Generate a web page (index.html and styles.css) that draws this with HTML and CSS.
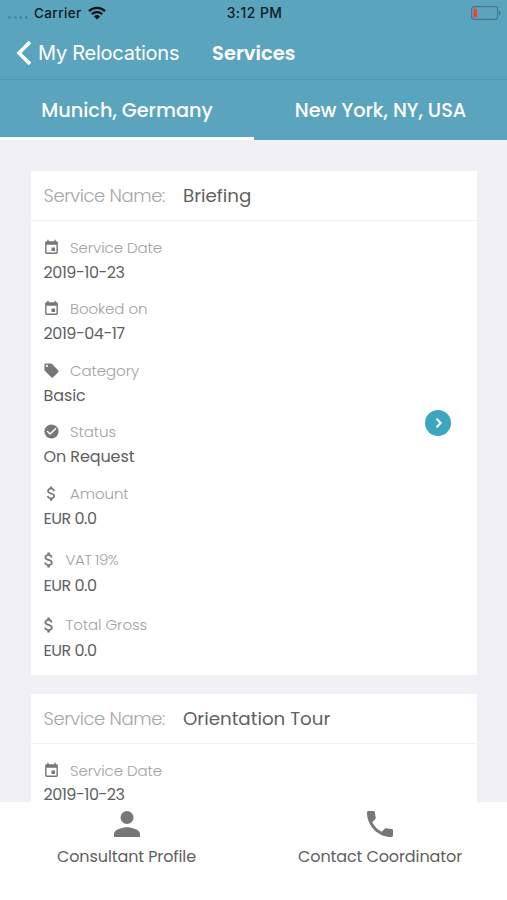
FILE: index.html
```html
<!DOCTYPE html>
<html lang="en">
<head>
<meta charset="utf-8">
<title>Services</title>
<link rel="stylesheet" href="styles.css">
</head>
<body>
<svg class="sprite" aria-hidden="true">
  <symbol id="calendar" viewBox="0 0 24 24"><path d="M17 12h-5v5h5v-5zM16 1v2H8V1H6v2H5a2 2 0 0 0-2 2v14a2 2 0 0 0 2 2h14a2 2 0 0 0 2-2V5a2 2 0 0 0-2-2h-1V1h-2zm3 18H5V8h14v11z"/></symbol>
  <symbol id="tag" viewBox="0 0 24 24"><path d="M21.4 11.6l-9-9A2 2 0 0 0 11 2H4a2 2 0 0 0-2 2v7c0 .6.2 1.100.6 1.400l9 9a2 2 0 0 0 2.800 0l7-7a2 2 0 0 0 0-2.800zM5.500 7a1.500 1.500 0 1 1 0-3 1.500 1.500 0 0 1 0 3z"/></symbol>
  <symbol id="check" viewBox="0 0 24 24"><path d="M12 2a10 10 0 1 0 0 20 10 10 0 0 0 0-20zm-2 15l-5-5 1.400-1.400 3.600 3.600 7.600-7.600L19 8l-9 9z"/></symbol>
  <symbol id="dollar" viewBox="0 0 24 24"><path d="M11.800 10.900c-2.270-.59-3-1.200-3-2.150 0-1.090 1.010-1.850 2.700-1.850 1.780 0 2.440.85 2.500 2.100h2.210c-.07-1.720-1.120-3.300-3.210-3.810V3h-3v2.160c-1.940.42-3.500 1.680-3.500 3.610 0 2.310 1.910 3.460 4.700 4.130 2.500.6 3 1.480 3 2.410 0 .69-.49 1.790-2.700 1.790-2.060 0-2.870-.92-2.980-2.100H6.320c.12 2.190 1.760 3.420 3.680 3.830V21h3v-2.150c1.950-.37 3.500-1.500 3.500-3.550 0-2.840-2.430-3.810-4.700-4.400z"/></symbol>
</svg>
<div class="screen">
  <header class="top">
    <div class="status">
      <div class="carrier">
        <span class="dots"><i></i><i></i><i></i><i></i></span>
        <span class="carrier-name">Carrier</span>
        <svg class="wifi" viewBox="0 0 18 14"><path d="M1 5.200a11.500 11.500 0 0 1 16 0M3.800 8.200a7.500 7.500 0 0 1 10.400 0" /><path class="solid" d="M9 13.500L5.900 10.400a4.500 4.500 0 0 1 6.200 0z"/></svg>
      </div>
      <span class="time">3:12 PM</span>
      <svg class="battery" viewBox="0 0 30 14"><rect class="shell" x=".6" y=".6" width="26" height="12.800" rx="3"/><rect class="level" x="2.500" y="2.500" width="3.500" height="9" rx="1.500"/><path class="tip" d="M28 4.500c2.200.8 2.200 4.200 0 5z"/></svg>
    </div>
    <nav class="navbar">
      <a class="back"><svg viewBox="0 0 16 26"><path d="M14 2L3 13l11 11"/></svg><span>My Relocations</span></a>
      <h1 class="title">Services</h1>
    </nav>
    <div class="tabs">
      <div class="tab active"><span>Munich, Germany</span></div>
      <div class="tab"><span>New York, NY, USA</span></div>
    </div>
  </header>
  <main class="list">
    <section class="card">
      <div class="card-head"><span class="head-label">Service Name:</span><span class="head-value">Briefing</span></div>
      <div class="card-body">
        <dl class="fields">
          <div class="field"><dt><svg><use href="#calendar"/></svg><span>Service Date</span></dt><dd class="number">2019-10-23</dd></div>
          <div class="field"><dt><svg><use href="#calendar"/></svg><span>Booked on</span></dt><dd class="number">2019-04-17</dd></div>
          <div class="field"><dt><svg><use href="#tag"/></svg><span>Category</span></dt><dd>Basic</dd></div>
          <div class="field"><dt><svg><use href="#check"/></svg><span>Status</span></dt><dd>On Request</dd></div>
          <div class="field amount"><dt><svg><use href="#dollar"/></svg><span>Amount</span></dt><dd class="number">EUR 0.0</dd></div>
          <div class="field cost vat"><dt><svg><use href="#dollar"/></svg><span>VAT 19%</span></dt><dd class="number">EUR 0.0</dd></div>
          <div class="field cost"><dt><svg><use href="#dollar"/></svg><span>Total Gross</span></dt><dd class="number">EUR 0.0</dd></div>
        </dl>
        <svg class="go" viewBox="0 0 26 26"><circle cx="13" cy="13" r="13"/><path d="M11.500 8.800l4.200 4.200-4.200 4.200"/></svg>
      </div>
    </section>
    <section class="card">
      <div class="card-head"><span class="head-label">Service Name:</span><span class="head-value">Orientation Tour</span></div>
      <div class="card-body">
        <dl class="fields">
          <div class="field"><dt><svg><use href="#calendar"/></svg><span>Service Date</span></dt><dd class="number">2019-10-23</dd></div>
        </dl>
      </div>
    </section>
  </main>
  <footer class="bottom">
    <a class="action"><svg viewBox="4 4 16 16"><path d="M12 12a4 4 0 1 0 0-8 4 4 0 0 0 0 8zm0 2c-2.670 0-8 1.340-8 4v2h16v-2c0-2.660-5.330-4-8-4z"/></svg><span>Consultant Profile</span></a>
    <a class="action"><svg viewBox="3 3 18 18"><path d="M20 15.500c-1.250 0-2.450-.2-3.570-.57a1 1 0 0 0-1.020.24l-2.200 2.200a15.050 15.050 0 0 1-6.590-6.580l2.200-2.210a1 1 0 0 0 .25-1.010A11.360 11.360 0 0 1 8.500 4a1 1 0 0 0-1-1H4a1 1 0 0 0-1 1c0 9.390 7.610 17 17 17a1 1 0 0 0 1-1v-3.500a1 1 0 0 0-1-1z"/></svg><span>Contact Coordinator</span></a>
  </footer>
</div>
</body>
</html>
```
FILE: styles.css
```css
* { box-sizing: border-box; }
body { margin: 0; font-family: Poppins, Inter, "Liberation Sans", sans-serif; color: #5f5f5f; }
.sprite { display: none; }
span, h1, dd { white-space: nowrap; }
.screen { width: 507px; height: 900px; overflow: hidden; display: flex; flex-direction: column; background: #f0f0f5; }
.top { flex: none; height: 140px; background: #5ba4be; color: #fff; }
.status { height: 26px; display: grid; grid-template-columns: 1fr auto 1fr; align-items: center; padding: 0 6px 0 8px; color: #10181c; font-family: Inter, "Liberation Sans", sans-serif; font-size: 13.500px; font-weight: 500; }
.carrier { display: flex; align-items: center; }
.carrier-name { letter-spacing: .4px; }
.dots { display: flex; gap: 2.500px; width: 26px; padding-top: 8px; }
.dots i { width: 3px; height: 3px; border-radius: 50%; background: #4588a1; }
.wifi { width: 18px; height: 14px; margin-left: 6px; fill: none; stroke: #0b1114; stroke-width: 2.300; }
.wifi .solid { fill: #0b1114; stroke: none; }
.time { font-size: 13.800px; letter-spacing: .5px; }
.battery { width: 30px; height: 14px; justify-self: end; }
.shell { fill: none; stroke: #44798d; stroke-width: 1.200; }
.level { fill: #ff3b30; }
.tip { fill: #44798d; }
.navbar { height: 54px; display: flex; align-items: center; padding-left: 16px; border-bottom: 1px solid #5198b1; }
.back { width: 196px; display: flex; align-items: center; gap: 6px; font-family: Inter, "Liberation Sans", sans-serif; font-size: 20px; letter-spacing: -.25px; }
.back svg { width: 16px; height: 26px; fill: none; stroke: #fff; stroke-width: 3.600; flex: none; }
.title { margin: 0; padding-top: 1px; font-size: 19.500px; font-weight: 600; }
.tabs { height: 60px; display: grid; grid-template-columns: 254px 253px; }
.tab { display: flex; align-items: center; justify-content: center; font-size: 19.300px; font-weight: 500; }
.tab.active { border-bottom: 3px solid #fff; padding-top: 3px; }
.list { flex: 1; min-height: 0; padding: 31px 30px 0 31px; display: flex; flex-direction: column; gap: 19px; }
.card { flex: none; height: 504px; background: #fff; }
.card:last-child { height: 108px; }
.card-head { height: 50px; display: flex; align-items: center; padding-left: 12.500px; border-bottom: 1px solid #f2f2f6; }
.head-label { width: 139.500px; color: #a6a6a6; font-size: 18px; font-weight: 300; letter-spacing: -.4px; }
.head-value { font-size: 18.300px; }
.card-body { display: flex; justify-content: space-between; padding: 13.500px 26px 0 12.500px; }
.fields { margin: 0; }
.field { height: 61.500px; font-size: 15px; }
.field dt { height: 25px; display: flex; align-items: center; color: #a2a2a2; font-weight: 300; letter-spacing: -.08px; }
.field dt svg { width: 17px; height: 17px; margin: 0 10.500px 0 -1px; fill: #777; }
.field dd { margin: 0; padding-top: 6px; line-height: 14px; font-size: 16px; letter-spacing: -.1px; }
.card:last-child dd { padding-top: 5.500px; }
.field .number { letter-spacing: -.5px; }
.field.amount dt svg { width: 19px; height: 19px; margin: 0 9.500px 0 -2px; }
.cost { height: 65px; }
.cost dd { padding-top: 6.500px; }
.field.cost dt svg { width: 20px; height: 20px; margin: 0 7px 0 -5px; }
.vat { margin-top: 5px; }
.vat dt span { letter-spacing: -.5px; }
.go { width: 26px; height: 26px; margin-top: 175.500px; fill: #3da5be; }
.go path { fill: none; stroke: #fff; stroke-width: 2; }
.bottom { flex: none; height: 98px; display: grid; grid-template-columns: 253px 254px; background: #fff; }
.action { display: flex; flex-direction: column; align-items: center; padding-top: 9px; font-size: 16px; line-height: 24px; letter-spacing: -.1px; }
.action svg { width: 26px; height: 26px; margin-bottom: 8px; fill: #777; }
```
